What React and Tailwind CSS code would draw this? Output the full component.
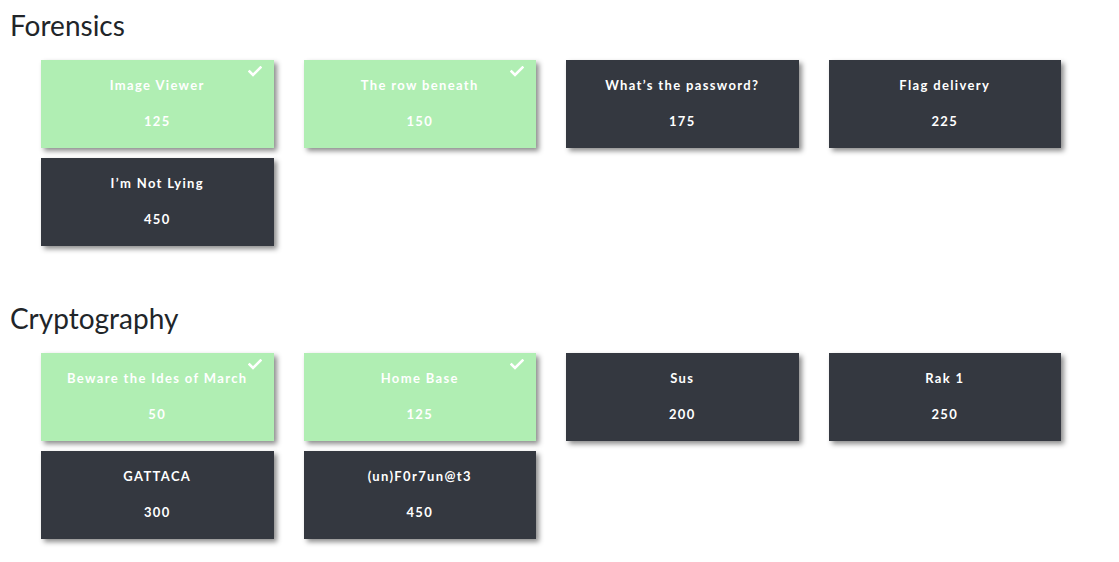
import React from "react";

const sections = [
  {
    name: "Forensics",
    challenges: [
      { title: "Image Viewer", points: 125, solved: true },
      { title: "The row beneath", points: 150, solved: true },
      { title: "What\u2019s the password?", points: 175 },
      { title: "Flag delivery", points: 225 },
      { title: "I\u2019m Not Lying", points: 450 },
    ],
  },
  {
    name: "Cryptography",
    challenges: [
      { title: "Beware the Ides of March", points: 50, solved: true },
      { title: "Home Base", points: 125, solved: true },
      { title: "Sus", points: 200 },
      { title: "Rak 1", points: 250 },
      { title: "GATTACA", points: 300 },
      { title: "(un)F0r7un@t3", points: 450 },
    ],
  },
];

function Check() {
  return (
    <svg
      className="absolute top-[6px] right-[12px] w-[14px] h-[11px]"
      viewBox="0 0 14 11"
      fill="none"
    >
      <path d="M1.5 5.5 L5 9 L12.5 1.5" stroke="white" strokeWidth="2.6" strokeLinecap="square" />
    </svg>
  );
}

function ChallengeCard({ title, points, solved }) {
  return (
    <div
      className={`relative h-[88.5px] flex flex-col items-center pt-[15px] text-white font-bold text-[13px] tracking-[1.35px] shadow-[3px_3px_5px_rgba(0,0,0,0.45)] ${
        solved ? "bg-[#b0eeb3]" : "bg-[#343840]"
      }`}
    >
      {solved && <Check />}
      <div className="leading-[20px] whitespace-nowrap">{title}</div>
      <div className="leading-[20px] mt-[16px]">{points}</div>
    </div>
  );
}

export default function App() {
  return (
    <div className="bg-white min-h-[562px] pt-[9px] font-['Lato',sans-serif] text-[#212529]">
      {sections.map((s, i) => (
        <div key={s.name} className={i > 0 ? "mt-[56px]" : ""}>
          <h3 className="text-[28px] leading-[1.2] pl-[10px] mb-[17px]">{s.name}</h3>
          <div className="ml-[41px] w-[1020px] grid grid-cols-4 gap-x-[30px] gap-y-[9.5px]">
            {s.challenges.map((c) => (
              <ChallengeCard key={c.title} {...c} />
            ))}
          </div>
        </div>
      ))}
    </div>
  );
}
